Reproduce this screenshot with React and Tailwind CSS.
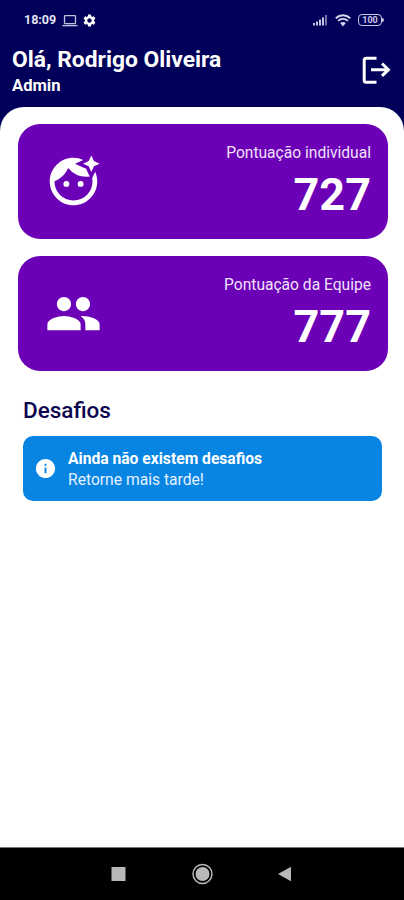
import { MdFaceRetouchingNatural, MdPeople, MdInfo, MdSettings } from "react-icons/md";

function StatusBar() {
  return (
    <div className="flex h-10 items-center pl-6 pr-5 text-[#e4e4f4]">
      <span className="w-[33px] whitespace-nowrap text-[12.5px] font-bold leading-4">18:09</span>
      <svg className="ml-[5px]" width="16" height="13" viewBox="0 0 16 13" fill="none" stroke="#c3c3e0">
        <rect x="2.5" y="1.6" width="11" height="8" rx="0.8" strokeWidth="1.3" />
        <path d="M0.5 11.6h15" strokeWidth="1.4" />
      </svg>
      <MdSettings className="ml-1 text-white" size={15} />
      <div className="ml-auto flex items-center gap-[7px]">
        <svg width="15" height="12" viewBox="0 0 15 12" fill="#c3c3e0">
          <rect x="0" y="9" width="2" height="2.5" />
          <rect x="3" y="7.5" width="2" height="4" />
          <rect x="6" y="5.5" width="2" height="6" />
          <rect x="9" y="3.3" width="2" height="8.2" />
          <rect x="12" y="1" width="2" height="10.5" opacity="0.6" />
        </svg>
        <svg width="16" height="13" viewBox="0 0 16 13" fill="none" stroke="#d6d6ec">
          <path d="M0.8 4.2C5 0.4 11 0.4 15.2 4.2" strokeWidth="2" />
          <path d="M3 6.9c3-2.6 7-2.6 10 0" strokeWidth="1.8" />
          <path d="M5.2 9c1.600-1.500 4-1.500 5.600 0L8 12.400z" fill="#d6d6ec" stroke="none" />
        </svg>
        <div className="flex items-center">
          <div className="flex h-3 w-6 items-center justify-center rounded-[4px] border-[1.5px] border-[#c9c9e4] text-[9px] font-bold leading-none text-[#c9c9e4]">
            100
          </div>
          <div className="h-1 w-[2px] rounded-r-sm bg-[#c9c9e4]" />
        </div>
      </div>
    </div>
  );
}

function ScoreCard({ icon: Icon, label, value }) {
  return (
    <section className="flex h-[115px] items-center justify-between rounded-[22px] bg-[#6b00b7] pl-[27px] pr-[16.5px] text-white">
      <Icon size={57} />
      <div className="flex h-full flex-col items-end pt-[18.5px]">
        <span className="text-[15.6px] leading-5 text-[#f0e2fa]">{label}</span>
        <span className="mt-[5.5px] text-[45px] font-bold leading-[54px]">{value}</span>
      </div>
    </section>
  );
}

export default function App() {
  return (
    <div className="flex h-[900px] w-[404px] flex-col overflow-hidden bg-[#00005a] font-['Roboto',sans-serif]">
      <StatusBar />
      <header className="flex h-[67px] shrink-0 justify-between pl-3 pr-[13px] text-white">
        <div className="pt-[7px]">
          <h1 className="whitespace-nowrap text-[22.8px] font-bold leading-[26px]">Olá, Rodrigo Oliveira</h1>
          <p className="mt-[3px] text-[16.6px] font-bold leading-5">Admin</p>
        </div>
        <svg className="mt-[15px]" width="30" height="30" viewBox="0 0 30 30" fill="none" stroke="white" strokeWidth="3">
          <path d="M15.5 3.2H5.2q-2 0-2 2v20q0 2 2 2h10.3" />
          <path d="M10 14.7h18M21 8.5l6.400 6.200-6.400 6.200" />
        </svg>
      </header>
      <main className="flex flex-1 flex-col gap-[17px] rounded-t-[24px] bg-white pl-[17.5px] pr-[16.5px] pt-[17.4px]">
        <ScoreCard icon={MdFaceRetouchingNatural} label="Pontuação individual" value="727" />
        <ScoreCard icon={MdPeople} label="Pontuação da Equipe" value="777" />
        <section className="mt-[9px] px-[5.5px]">
          <h2 className="text-[22.5px] font-medium leading-[26px] text-[#0d0550]">Desafios</h2>
          <div className="mt-[12.6px] flex h-[65px] items-center rounded-[10px] bg-[#0884e3] pl-[11px] text-white">
            <MdInfo className="mt-px" size={23} />
            <div className="ml-[11px] mt-px text-[15.65px] leading-[21px]">
              <p className="font-bold">Ainda não existem desafios</p>
              <p className="text-[#e3f2ff]">Retorne mais tarde!</p>
            </div>
          </div>
        </section>
      </main>
      <nav className="flex h-[53px] shrink-0 items-center justify-center border-t border-[#777] bg-black">
        <svg width="184" height="24" viewBox="0 0 184 24" fill="#b8b8b8">
          <rect x="1.5" y="5" width="14" height="14" />
          <circle cx="92.5" cy="12" r="7" />
          <circle cx="92.5" cy="12" r="9.5" fill="none" stroke="#b8b8b8" strokeWidth="1.5" />
          <path d="M181 4.7v14.6L168 12z" />
        </svg>
      </nav>
    </div>
  );
}
